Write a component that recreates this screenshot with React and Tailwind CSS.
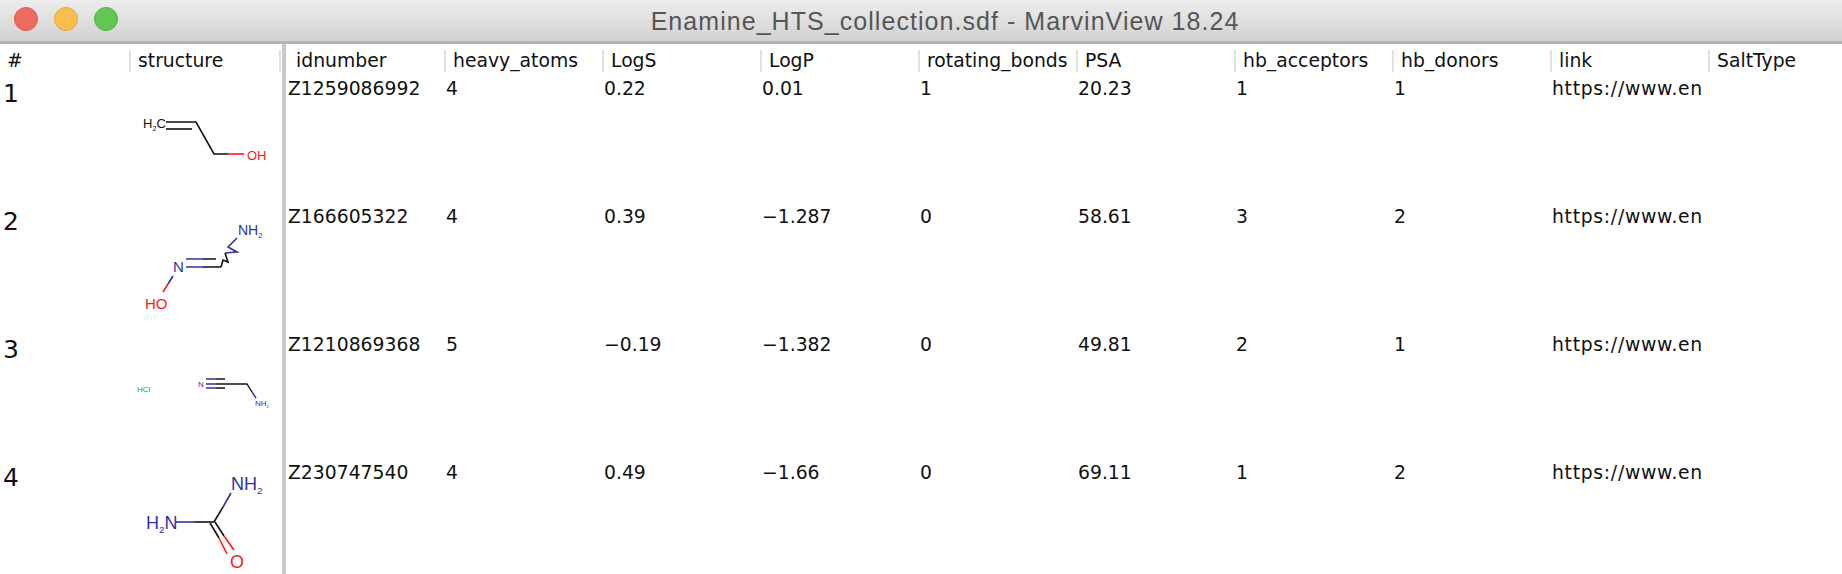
const rightCols = ["idnumber", "heavy_atoms", "LogS", "LogP", "rotating_bonds", "PSA", "hb_acceptors", "hb_donors", "link", "SaltType"];

const rows = [
  ["Z1259086992", "4", "0.22", "0.01", "1", "20.23", "1", "1", "https://www.en", ""],
  ["Z166605322", "4", "0.39", "−1.287", "0", "58.61", "3", "2", "https://www.en", ""],
  ["Z1210869368", "5", "−0.19", "−1.382", "0", "49.81", "2", "1", "https://www.en", ""],
  ["Z230747540", "4", "0.49", "−1.66", "0", "69.11", "1", "2", "https://www.en", ""],
];

const BLUE = "#32329f";
const RED = "#ff1a1a";
const INK = "#111111";

function Bond({ d, c = INK, w = 1.6 }) {
  return <path d={d} stroke={c} strokeWidth={w} fill="none" />;
}

function Label({ x, y, size = 14, c = INK, sub, children, after }) {
  return (
    <text x={x} y={y} fontSize={size} fill={c} fontFamily="'Liberation Sans', sans-serif">
      {children}
      {sub && <tspan fontSize={size * 0.55} dy={size * 0.2}>{sub}</tspan>}
      {after && <tspan dy={size * -0.2}>{after}</tspan>}
    </text>
  );
}

// coordinates are local to a 150x128 structure cell
function Mol1() {
  return (
    <svg viewBox="0 0 150 128" className="w-full h-full">
      <Label x={14} y={56} size={13} sub="2" after="C">H</Label>
      <Bond d="M37 50H67L85 82H99" />
      <Bond d="M37 57H63" />
      <Bond d="M99 82H115" c={RED} />
      <Label x={118} y={88} size={13} c={RED}>OH</Label>
    </svg>
  );
}

function Mol2() {
  return (
    <svg viewBox="0 0 150 128" className="w-full h-full">
      <Label x={109} y={35} size={14} c={BLUE} sub="2">NH</Label>
      <Label x={44} y={72} size={15} c={BLUE}>N</Label>
      <Label x={16} y={109} size={15} c={RED}>HO</Label>
      <Bond d="M57 59H74M57 67H74" c={BLUE} />
      <Bond d="M74 59H87M74 67H92" />
      <Bond d="M92 67L94 60L99 62L96 53" />
      <Bond d="M96 53L108 52L99 47L108 38" c={BLUE} />
      <Bond d="M44 76L39 84" c={BLUE} />
      <Bond d="M39 84L34 92" c={RED} />
    </svg>
  );
}

function Mol3() {
  return (
    <svg viewBox="0 0 150 128" className="w-full h-full">
      <Label x={8} y={64} size={8} c="#22a52a">HCl</Label>
      <Label x={69} y={59} size={8} c={BLUE}>N</Label>
      <Bond d="M77 51H87M77 56H87M77 60H87" c={BLUE} w={1.4} />
      <Bond d="M87 51H96M87 56H96M87 60H96" w={1.4} />
      <Bond d="M96 56H118L123 64" w={1.4} />
      <Bond d="M123 64L127 70" c={BLUE} w={1.4} />
      <Label x={126} y={78} size={8} c={BLUE} sub="2">NH</Label>
    </svg>
  );
}

function Mol4() {
  return (
    <svg viewBox="0 0 150 128" className="w-full h-full">
      <Label x={102} y={34} size={18} c={BLUE} sub="2">NH</Label>
      <Label x={17} y={73} size={18} c={BLUE} sub="2" after="N">H</Label>
      <Label x={101} y={112} size={18} c={RED}>O</Label>
      <Bond d="M47 66H66" c={BLUE} />
      <Bond d="M66 66H85" />
      <Bond d="M85 66L94 51" />
      <Bond d="M94 51L102 37" c={BLUE} />
      <Bond d="M81 67L90 82M86 66L95 80" />
      <Bond d="M90 82L98 98M95 80L105 94" c={RED} />
    </svg>
  );
}

const mols = [Mol1, Mol2, Mol3, Mol4];

function HeadCell({ label, className }) {
  return (
    <div className={`h-[28px] pt-[6px] ${className}`}>
      <div className="h-[22px] border-l-2 border-[#e2e2e2] pl-[7px] leading-[21px] whitespace-nowrap overflow-hidden">
        {label}
      </div>
    </div>
  );
}

export default function App() {
  return (
    <div className="w-[1842px] h-[574px] overflow-hidden flex flex-col bg-white text-[#111] text-[18.8px] font-['DejaVu_Sans',sans-serif]">
      <div className="relative h-[44px] shrink-0 flex items-center gap-[16px] pl-[14px] pb-[3px] border-b-[3px] border-[#b4b4b4] bg-gradient-to-b from-[#ededed] to-[#d2d2d2]">
        <span className="w-[24px] h-[24px] rounded-full bg-[#ee6b60] border border-[#dc5b50]" />
        <span className="w-[24px] h-[24px] rounded-full bg-[#f8bf4f] border border-[#e5a73f]" />
        <span className="w-[24px] h-[24px] rounded-full bg-[#62c655] border border-[#53b046]" />
        <div className="absolute inset-x-0 top-[1px] h-[41px] pl-[48px] flex items-center justify-center text-[25px] tracking-[1.05px] text-[#565656] font-['Liberation_Sans',sans-serif]">
          Enamine_HTS_collection.sdf - MarvinView 18.24
        </div>
      </div>

      <div className="flex flex-1 min-h-0">
        <div className="w-[282px] shrink-0">
          <div className="flex">
            <div className="w-[129px] h-[28px] pt-[6px] pl-[7px] leading-[21px]">#</div>
            <HeadCell label="structure" className="w-[150px]" />
            <div className="w-[3px] pt-[6px]"><div className="h-[22px] w-[2px] bg-[#e2e2e2]" /></div>
          </div>
          {mols.map((Mol, i) => (
            <div key={i} className="flex h-[128px]">
              <div className="w-[129px] pl-[3px] pt-[4px] text-[25px] leading-[36px]">{i + 1}</div>
              <div className="w-[150px] overflow-hidden"><Mol /></div>
            </div>
          ))}
        </div>

        <div className="w-[4px] shrink-0 bg-[#c9c9c9]" />

        <div className="flex-1 min-w-0 overflow-hidden">
          <div className="flex">
            <div className="w-[158px] shrink-0 h-[28px] pt-[6px] pl-[10px] leading-[21px]">idnumber</div>
            {rightCols.slice(1).map((c) => (
              <HeadCell key={c} label={c} className="w-[158px] shrink-0" />
            ))}
          </div>
          {rows.map((row, i) => (
            <div key={i} className="flex h-[128px]">
              {row.map((v, j) => (
                <div key={j} className="w-[158px] shrink-0 pl-[2px] pt-[5px] leading-[24px]">
                  <div className={j === 8 ? "w-[151px] overflow-hidden whitespace-nowrap tracking-[0.7px]" : "w-[151px] overflow-hidden whitespace-nowrap"}>{v}</div>
                </div>
              ))}
            </div>
          ))}
        </div>
      </div>
    </div>
  );
}
